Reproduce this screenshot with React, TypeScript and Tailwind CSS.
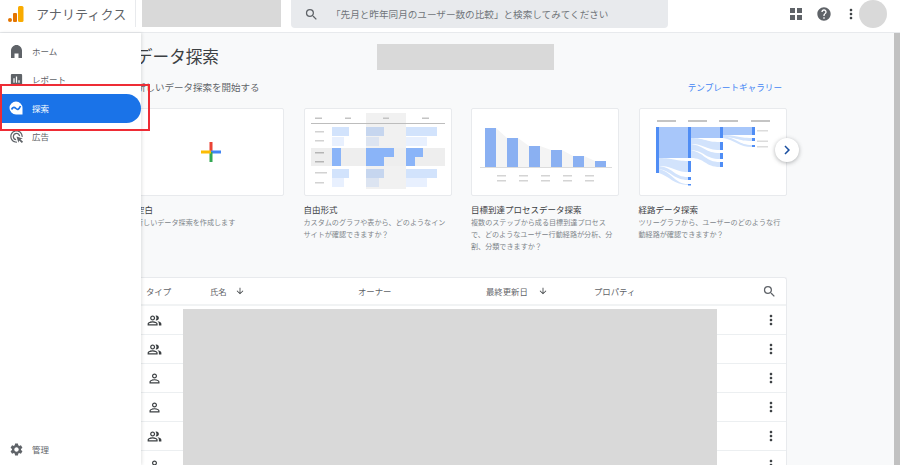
import {
  MdAdsClick,
  MdArrowDownward,
  MdAssessment,
  MdChevronRight,
  MdHelp,
  MdMoreVert,
  MdOutlinePeopleAlt,
  MdPersonOutline,
  MdSearch,
  MdSettings,
} from "react-icons/md";
import type { ReactNode } from "react";

const fontStack = "font-['Noto_Sans_CJK_JP','Noto_Sans',sans-serif]";

function HomeIcon() {
  return (
    <svg width="15" height="15" viewBox="0 0 15 15" fill="#5f6368">
      <path d="M2 14V6.5C2 3.5 4.5 1 7.5 1S13 3.500 13 6.500V14H9.500V9.500h-4V14z" />
    </svg>
  );
}

function ExploreIcon() {
  return (
    <svg width="16" height="16" viewBox="0 0 16 16">
      <path d="M8 1.500a6.500 6.500 0 1 0 0 13h6.500V8A6.500 6.500 0 0 0 8 1.500z" fill="#fff" />
      <path d="M3.500 9.500C5 6.500 6.500 7 8 8.500S11 9.500 12.500 6" fill="none" stroke="#1a73e8" strokeWidth="1.700" />
    </svg>
  );
}

function NavItem({ icon, label, active }: { icon: ReactNode; label: string; active?: boolean }) {
  return (
    <div className={active ? "flex h-[28.5px] items-center rounded-r-full bg-[#1a73e8] text-white" : "flex h-[28.5px] items-center text-[#5f6368]"}>
      <span className="flex w-8 justify-center">{icon}</span>
      <span className="text-[8.5px]">{label}</span>
    </div>
  );
}

function Logo() {
  return (
    <svg width="18" height="18" viewBox="0 0 18 18" className="ml-[7px]">
      <circle cx="3" cy="15" r="2" fill="#e37400" />
      <rect x="6" y="8" width="4" height="9" rx="1" fill="#e37400" />
      <rect x="11" y="1" width="5.500" height="16" rx="1.500" fill="#f9ab00" />
    </svg>
  );
}

function Blank() {
  return (
    <div className="flex h-full items-center justify-center">
      <svg width="20" height="20" viewBox="0 0 20 20" className="ml-[2px]">
        <rect x="8.500" y="0" width="3" height="10" fill="#ea4335" />
        <rect x="10" y="8.500" width="10" height="3" fill="#4285f4" />
        <rect x="8.500" y="10" width="3" height="10" fill="#34a853" />
        <rect x="0" y="8.500" width="10" height="3" fill="#fbbc04" />
      </svg>
    </div>
  );
}

function FreeForm() {
  const rows = [
    { y: 19, fill: "#d2e3fc", mid: "#c6d6ef", w: [17, 18, 31] },
    { y: 29, fill: "#e8f0fe", mid: "#dce4f1", w: [12, 13, 21] },
    { y: 40, fill: "#8ab4f8", mid: "#8ab4f8", w: [9, 28, 17] },
    { y: 49, fill: "#8ab4f8", mid: "#8ab4f8", w: [9, 18, 9] },
    { y: 61, fill: "#d2e3fc", mid: "#c6d6ef", w: [17, 18, 31] },
    { y: 70, fill: "#e8f0fe", mid: "#dce4f1", w: [12, 13, 21] },
  ];
  const labels = [23, 32, 44, 53, 64, 74];
  return (
    <svg width="148" height="87" viewBox="0 0 148 87">
      <rect x="62" y="5" width="40" height="76" fill="#f1f1f1" />
      <rect x="7" y="40" width="134" height="18" fill="#eeeeee" />
      {[[11, 7], [41, 6], [79, 6], [118, 7]].map(([x, w]) => (
        <rect key={x} x={x} y="9.500" width={w} height="1.500" fill="#c4c4c4" />
      ))}
      <rect x="7" y="15" width="134" height="1" fill="#bdbdbd" />
      {labels.map((y, i) => (
        <rect key={y} x="11" y={y} width={i === 4 ? 12 : 9} height="1.500" fill={i === 2 || i === 3 ? "#b5b5b5" : "#d2d2d2"} />
      ))}
      {rows.map((r) => (
        <g key={r.y} fill={r.fill}>
          <rect x="28" y={r.y} width={r.w[0]} height="9" />
          <rect x="62" y={r.y} width={r.w[1]} height="9" fill={r.mid} />
          <rect x="102" y={r.y} width={r.w[2]} height="9" />
        </g>
      ))}
    </svg>
  );
}

function Funnel() {
  const bars = [
    { x: 14, y: 20 },
    { x: 36, y: 30 },
    { x: 58, y: 38 },
    { x: 80, y: 42 },
    { x: 102, y: 48 },
    { x: 124, y: 53 },
  ];
  return (
    <svg width="148" height="87" viewBox="0 0 148 87">
      {bars.slice(0, -1).map((b, i) => (
        <polygon key={b.x} points={`${b.x + 11},${b.y} ${b.x + 22},${bars[i + 1].y} ${b.x + 22},59 ${b.x + 11},59`} fill="#f4f4f4" />
      ))}
      {bars.map((b) => (
        <rect key={b.x} x={b.x} y={b.y} width="11" height={59 - b.y} fill="#8ab0f2" />
      ))}
      <rect x="9" y="59" width="132" height="1" fill="#dcdcdc" />
      {[26, 48, 70, 92, 114].map((x) => (
        <g key={x} fill="#d4d4d4">
          <rect x={x} y="67" width="9" height="1.500" />
          <rect x={x} y="72" width="9" height="1.500" />
        </g>
      ))}
    </svg>
  );
}

function PathChart() {
  return (
    <svg width="148" height="87" viewBox="0 0 148 87">
      {[18, 49, 80, 112].map((x) => (
        <rect key={x} x={x} y="12" width="19" height="2" fill="#c4c4c4" />
      ))}
      <rect x="20" y="19" width="29" height="31" fill="#a8c7fa" />
      <rect x="52" y="19" width="29" height="11" fill="#a8c7fa" />
      <rect x="84" y="19" width="29" height="8" fill="#a8c7fa" />
      <g fill="#d2e3fc">
        <path d="M20 50C35 50 35 53 49 53V64C35 64 35 58 20 58z" />
        <path d="M20 58C35 60 35 69 49 69V72C35 72 32 63 20 61z" />
        <path d="M20 61C34 65 36 76 49 76V77C35 77 30 68 20 65z" />
        <path d="M52 30C66 30 66 34 81 34V42C66 42 66 36 52 36z" />
        <path d="M52 36C66 38 66 45 81 45V51C66 51 66 43 52 42z" />
        <path d="M52 42C66 45 66 54 81 54V59C66 59 66 50 52 50z" />
        <path d="M84 27C98 27 98 30 113 30V33C98 33 98 29 84 29z" />
        <path d="M84 28C98 30 100 37 113 37V39C100 39 96 32 84 30z" />
      </g>
      <g fill="#4f8df5">
        <rect x="17" y="19" width="3" height="46" />
        <rect x="49" y="19" width="3" height="31" />
        <rect x="49" y="53" width="3" height="11" />
        <rect x="49" y="69" width="3" height="3" />
        <rect x="49" y="76" width="3" height="1.500" />
        <rect x="81" y="19" width="3" height="11" />
        <rect x="81" y="34" width="3" height="8" />
        <rect x="81" y="45" width="3" height="6" />
        <rect x="81" y="54" width="3" height="5" />
        <rect x="113" y="19" width="3" height="8" />
        <rect x="113" y="30" width="3" height="3" />
        <rect x="113" y="37" width="3" height="2" />
      </g>
      <g fill="#dcdcdc">
        <rect x="118" y="22" width="11" height="1.500" />
        <rect x="118" y="32.500" width="11" height="1.500" />
        <rect x="118" y="38" width="11" height="1.500" />
      </g>
    </svg>
  );
}

function TemplateCard({ title, desc, children }: { title: string; desc: string; children: ReactNode }) {
  return (
    <div className="w-[148px] shrink-0">
      <div className="h-[88px] rounded-[2px] border border-[#e8eaed] bg-white">
        <div className="-m-px">{children}</div>
      </div>
      <div className="mt-[7px] text-[8.5px] leading-[12px] text-[#3c4043]">{title}</div>
      <p className="mt-[1px] text-[7.1px] leading-[12px] text-[#80868b]">{desc}</p>
    </div>
  );
}

const tableRows = ["group", "group", "person", "person", "group", "person"];

export default function App() {
  return (
    <div className={`flex h-[465px] w-[900px] flex-col overflow-hidden bg-white ${fontStack}`}>
      {/* Top bar */}
      <header className="flex h-[33px] shrink-0 items-start border-b border-[#e8eaed] bg-white">
        <div className="flex h-[27px] w-[136px] items-center border-r border-[#e8eaed]">
          <Logo />
          <span className="ml-[11px] text-[13px] tracking-[0.1px] text-[#5f6368]">アナリティクス</span>
        </div>
        <div className="ml-[6px] h-[27px] w-[139px] bg-[#d9d9d9]" />
        <div className="ml-[10px] flex h-[28px] w-[377px] items-center rounded-b-[4px] bg-[#e8eaed]">
          <MdSearch className="ml-[13px] text-[#5f6368]" size={15} />
          <span className="ml-[12px] text-[9.6px] text-[#70757a]">「先月と昨年同月のユーザー数の比較」と検索してみてください</span>
        </div>
        <div className="ml-[122px] flex h-[27px] items-center text-[#5f6368]">
          <svg width="12" height="12" viewBox="0 0 12 12" className="mr-[14px]" fill="#5f6368">
            <rect x="0" y="0" width="5" height="5" />
            <rect x="7" y="0" width="5" height="5" />
            <rect x="0" y="7" width="5" height="5" />
            <rect x="7" y="7" width="5" height="5" />
          </svg>
          <MdHelp size={16} />
          <MdMoreVert size={16} className="ml-[11px] text-[#3c4043]" />
        </div>
        <div className="h-[28px] w-[28px] rounded-full bg-[#d9d9d9]" />
      </header>

      <div className="relative flex min-h-0 flex-1">
        {/* Main content */}
        <main className="min-w-0 flex-1 overflow-hidden bg-[#f8f9fa] pl-[136px]">
          <div className="mt-[11px] flex h-[26px] items-center">
            <h1 className="relative -top-[1px] w-[241px] text-[16.6px] text-[#3c4043]">データ探索</h1>
            <div className="h-[26px] w-[177px] bg-[#d9d9d9]" />
          </div>
          <div className="mt-[10px] flex w-[646px] items-center justify-between">
            <span className="text-[9.5px] text-[#5f6368]">新しいデータ探索を開始する</span>
            <a className="text-[8.6px] text-[#4285f4]">テンプレートギャラリー</a>
          </div>
          <div className="relative mt-[14px] flex w-[651px] gap-[19.5px]">
            <TemplateCard title="空白" desc="新しいデータ探索を作成します">
              <div className="h-[87px]"><Blank /></div>
            </TemplateCard>
            <TemplateCard title="自由形式" desc="カスタムのグラフや表から、どのようなインサイトが確認できますか？">
              <FreeForm />
            </TemplateCard>
            <TemplateCard title="目標到達プロセスデータ探索" desc="複数のステップから成る目標到達プロセスで、どのようなユーザー行動経路が分析、分割、分類できますか？">
              <Funnel />
            </TemplateCard>
            <TemplateCard title="経路データ探索" desc="ツリーグラフから、ユーザーのどのような行動経路が確認できますか？">
              <PathChart />
            </TemplateCard>
            <button className="absolute left-[639px] top-[30px] flex h-6 w-6 items-center justify-center rounded-full bg-white shadow-[0_1px_4px_rgba(60,64,67,0.4)]">
              <MdChevronRight size={18} className="text-[#1a4fa0]" />
            </button>
          </div>

          {/* Explorations table */}
          <div className="relative mt-[25px] w-[651px] rounded-t-[3px] border border-b-0 border-[#e8eaed] bg-white">
            <div className="flex h-[28px] items-center border-b-2 border-[#f1f3f4] pl-[9px] text-[8.4px] text-[#5f6368]">
              <span className="w-[64px]">タイプ</span>
              <span className="flex w-[148px] items-center gap-[8px]">
                氏名 <MdArrowDownward size={10} className="text-[#3c4043]" />
              </span>
              <span className="w-[128px]">オーナー</span>
              <span className="flex w-[108px] items-center gap-[10px]">
                最終更新日 <MdArrowDownward size={10} className="text-[#3c4043]" />
              </span>
              <span className="flex-1">プロパティ</span>
              <MdSearch size={15} className="mr-[9px] text-[#5f6368]" />
            </div>
            {tableRows.map((type, i) => (
              <div key={i} className="flex h-[29px] items-center justify-between border-b border-[#eceff1] pl-[10px] pr-[7px] text-[#3c4043]">
                {type === "group" ? <MdOutlinePeopleAlt size={15} /> : <MdPersonOutline size={15} />}
                <MdMoreVert size={16} />
              </div>
            ))}
            <div className="absolute left-[46px] top-[31px] h-[160px] w-[534px] bg-[#d9d9d9]" />
          </div>
        </main>

        <div className="w-[6px] shrink-0 bg-[#c1c1c1]" />

        {/* Nav drawer */}
        <aside className="absolute inset-y-0 left-0 flex w-[141px] flex-col bg-white pt-[4px] shadow-[1px_0_3px_rgba(60,64,67,0.15)]">
          <NavItem icon={<HomeIcon />} label="ホーム" />
          <NavItem icon={<MdAssessment size={15} />} label="レポート" />
          <NavItem icon={<ExploreIcon />} label="探索" active />
          <NavItem icon={<MdAdsClick size={15} />} label="広告" />
          <div className="mt-auto mb-[1px]">
            <NavItem icon={<MdSettings size={15} />} label="管理" />
          </div>
        </aside>

        {/* Annotation box */}
        <div className="absolute left-0 top-[51px] h-[47px] w-[150px] border-2 border-[#ee2c35]" />
      </div>
    </div>
  );
}
